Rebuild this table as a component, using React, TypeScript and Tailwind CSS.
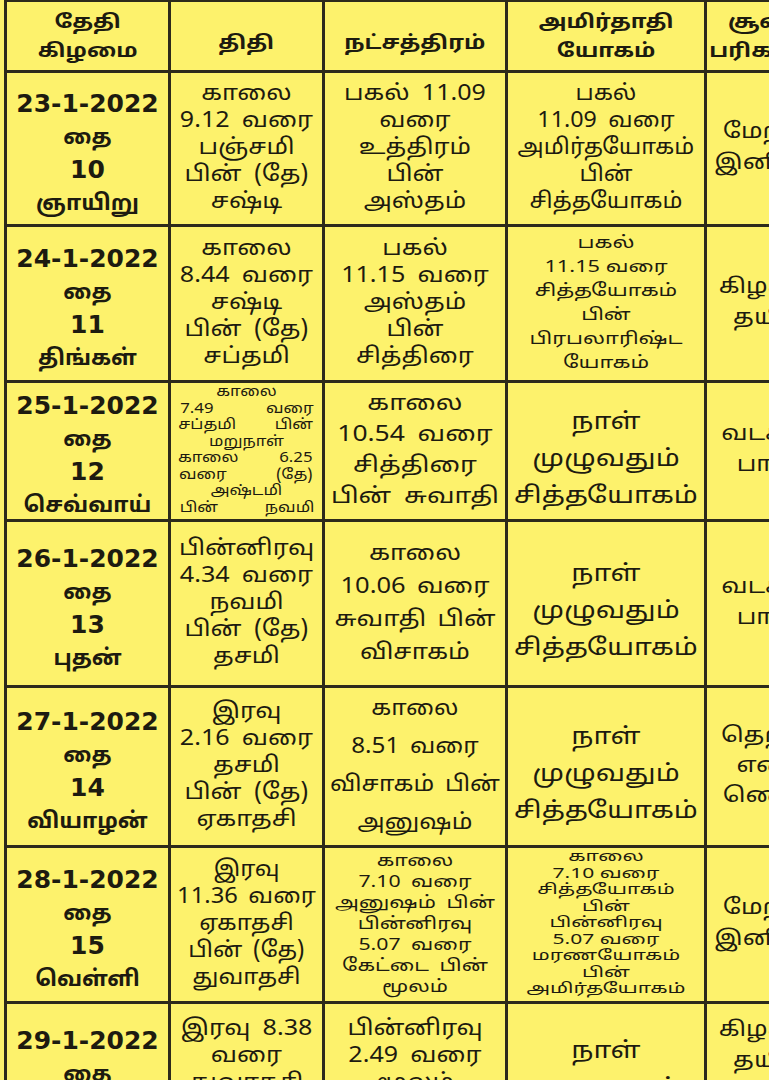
import type { ReactNode } from "react";

type Cell = {
  lines: string[];
  size?: string;
  justify?: boolean;
};

type Row = {
  date: string[];
  thithi: Cell;
  star: Cell;
  yogam: Cell;
  soolam: Cell;
  h: string;
};

const big = "pt-[18px] text-[23px] leading-[37px] scale-x-[1.22]";
const side = "text-[21px] leading-[31px] scale-x-[1.2]";
const yog = "text-[22px] leading-[27px] scale-x-[1.06] [word-spacing:5px]";

const rows: Row[] = [
  {
    date: ["23-1-2022", "தை", "10", "ஞாயிறு"],
    thithi: { lines: ["காலை", "9.12 வரை", "பஞ்சமி", "பின் (தே)", "சஷ்டி"] },
    star: { lines: ["பகல் 11.09", "வரை", "உத்திரம்", "பின்", "அஸ்தம்"] },
    yogam: { lines: ["பகல்", "11.09 வரை", "அமிர்தயோகம்", "பின்", "சித்தயோகம்"], size: yog },
    soolam: { lines: ["மேற்கு", "இனிப்பு"], size: side },
    h: "h-[151px]",
  },
  {
    date: ["24-1-2022", "தை", "11", "திங்கள்"],
    thithi: { lines: ["காலை", "8.44 வரை", "சஷ்டி", "பின் (தே)", "சப்தமி"] },
    star: { lines: ["பகல்", "11.15 வரை", "அஸ்தம்", "பின்", "சித்திரை"] },
    yogam: {
      lines: ["பகல்", "11.15 வரை", "சித்தயோகம்", "பின்", "பிரபலாரிஷ்ட", "யோகம்"],
      size: "text-[17px] leading-[24px] scale-x-[1.28]",
    },
    soolam: { lines: ["கிழக்கு", "தயிர்"], size: side },
    h: "h-[153px]",
  },
  {
    date: ["25-1-2022", "தை", "12", "செவ்வாய்"],
    thithi: {
      lines: [
        "காலை",
        "7.49 வரை",
        "சப்தமி பின்",
        "மறுநாள்",
        "காலை 6.25",
        "வரை (தே)",
        "அஷ்டமி",
        "பின் நவமி",
      ],
      size: "text-[14px] leading-[16.5px]",
      justify: true,
    },
    star: {
      lines: ["காலை", "10.54 வரை", "சித்திரை", "பின் சுவாதி"],
      size: "text-[22px] leading-[31px] scale-x-[1.2] [word-spacing:5px]",
    },
    yogam: { lines: ["நாள்", "முழுவதும்", "சித்தயோகம்"], size: big },
    soolam: { lines: ["வடக்கு", "பால்"], size: side },
    h: "h-[136px]",
  },
  {
    date: ["26-1-2022", "தை", "13", "புதன்"],
    thithi: { lines: ["பின்னிரவு", "4.34 வரை", "நவமி", "பின் (தே)", "தசமி"] },
    star: {
      lines: ["காலை", "10.06 வரை", "சுவாதி பின்", "விசாகம்"],
      size: "text-[22px] leading-[33px] scale-x-[1.16] [word-spacing:4px]",
    },
    yogam: { lines: ["நாள்", "முழுவதும்", "சித்தயோகம்"], size: big },
    soolam: { lines: ["வடக்கு", "பால்"], size: side },
    h: "h-[163px]",
  },
  {
    date: ["27-1-2022", "தை", "14", "வியாழன்"],
    thithi: { lines: ["இரவு", "2.16 வரை", "தசமி", "பின் (தே)", "ஏகாதசி"] },
    star: {
      lines: ["காலை", "8.51 வரை", "விசாகம் பின்", "அனுஷம்"],
      size: "text-[22px] leading-[38px] scale-x-[1.1] [word-spacing:4px]",
    },
    yogam: { lines: ["நாள்", "முழுவதும்", "சித்தயோகம்"], size: big },
    soolam: { lines: ["தெற்கு", "எண்", "ணெய்"], size: "text-[21px] leading-[30px] scale-x-[1.2]" },
    h: "h-[157px]",
  },
  {
    date: ["28-1-2022", "தை", "15", "வெள்ளி"],
    thithi: {
      lines: ["இரவு", "11.36 வரை", "ஏகாதசி", "பின் (தே)", "துவாதசி"],
      size: "text-[22px] leading-[27px] scale-x-[1.08] [word-spacing:4px]",
    },
    star: {
      lines: ["காலை", "7.10 வரை", "அனுஷம் பின்", "பின்னிரவு", "5.07 வரை", "கேட்டை பின்", "மூலம்"],
      size: "text-[17px] leading-[21px] scale-x-[1.25] [word-spacing:4px]",
    },
    yogam: {
      lines: [
        "காலை",
        "7.10 வரை",
        "சித்தயோகம்",
        "பின்",
        "பின்னிரவு",
        "5.07 வரை",
        "மரணயோகம்",
        "பின்",
        "அமிர்தயோகம்",
      ],
      size: "text-[14px] leading-[16.5px] scale-x-[1.5]",
    },
    soolam: { lines: ["மேற்கு", "இனிப்பு"], size: side },
    h: "h-[153px]",
  },
  {
    date: ["29-1-2022", "தை", "16", "சனி"],
    thithi: { lines: ["இரவு 8.38", "வரை", "துவாதசி", "பின் (தே)", "திரயோதசி"] },
    star: { lines: ["பின்னிரவு", "2.49 வரை", "மூலம்", "பின்", "பூராடம்"] },
    yogam: { lines: ["நாள்", "முழுவதும்", "சித்தயோகம்"], size: big },
    soolam: { lines: ["கிழக்கு", "தயிர்"], size: side },
    h: "h-[200px]",
  },
];

function Box({ children, className = "" }: { children: ReactNode; className?: string }) {
  return (
    <div className={`flex flex-col items-center justify-center bg-[#fdf26c] text-center text-[#1d1b10] ${className}`}>
      {children}
    </div>
  );
}

function TextCell({ cell, top = false }: { cell: Cell; top?: boolean }) {
  const size = cell.size ?? "text-[22px] leading-[27px] scale-x-[1.14] [word-spacing:5px]";
  return (
    <Box className={`px-1 ${top ? "justify-start pt-[12px]" : ""}`}>
      <div className={`w-full ${size}`}>
        {cell.lines.map((l, i) =>
          cell.justify && l.includes(" ") ? (
            <div key={i} className="flex justify-between px-[8px]">
              {l.split(" ").map((w, j) => (
                <span key={j} className="inline-block scale-x-[1.2]">
                  {w}
                </span>
              ))}
            </div>
          ) : (
            <div key={i} className={cell.justify ? "scale-x-[1.2]" : ""}>
              {l}
            </div>
          ),
        )}
      </div>
    </Box>
  );
}

function Head({ lines, single = false }: { lines: string[]; single?: boolean }) {
  return (
    <Box className={`h-[68px] font-bold ${single ? "pt-4" : "pt-1"}`}>
      <div className="scale-x-[1.2] text-[19px] leading-[29px]">
        {lines.map((l) => (
          <div key={l}>{l}</div>
        ))}
      </div>
    </Box>
  );
}

export default function App() {
  return (
    <div className="h-[1080px] w-[769px] overflow-hidden bg-[#fdf26c] font-['Noto_Sans_Tamil','Lohit_Tamil','Noto_Sans',sans-serif]">
      <div className="ml-[4px] w-max bg-[#2d2a1b] pt-[2px] pl-[3px]">
        <div className="grid grid-cols-[161px_151px_180px_196px_120px] gap-[3px]">
          <Head lines={["தேதி", "கிழமை"]} />
          <Head lines={["திதி"]} single />
          <Head lines={["நட்சத்திரம்"]} single />
          <Head lines={["அமிர்தாதி", "யோகம்"]} />
          <Head lines={["சூலம்", "பரிகாரம்"]} />

          {rows.map((r, i) => {
            const last = i === rows.length - 1;
            return [
              <Box key={`d${i}`} className={`${r.h} ${last ? "justify-start pt-[20px]" : "pt-2"}`}>
                {r.date.map((l, j) => (
                  <div
                    key={j}
                    className={`font-['DejaVu_Sans','Noto_Sans_Tamil',sans-serif] font-bold leading-[33px] ${j === 0 || j === 2 ? "text-[25px]" : "text-[22px]"}`}
                  >
                    {l}
                  </div>
                ))}
              </Box>,
              <TextCell key={`t${i}`} cell={r.thithi} top={last} />,
              <TextCell key={`s${i}`} cell={r.star} top={last} />,
              <TextCell key={`y${i}`} cell={r.yogam} top={last} />,
              <TextCell key={`p${i}`} cell={r.soolam} top={last} />,
            ];
          })}
        </div>
      </div>
    </div>
  );
}
